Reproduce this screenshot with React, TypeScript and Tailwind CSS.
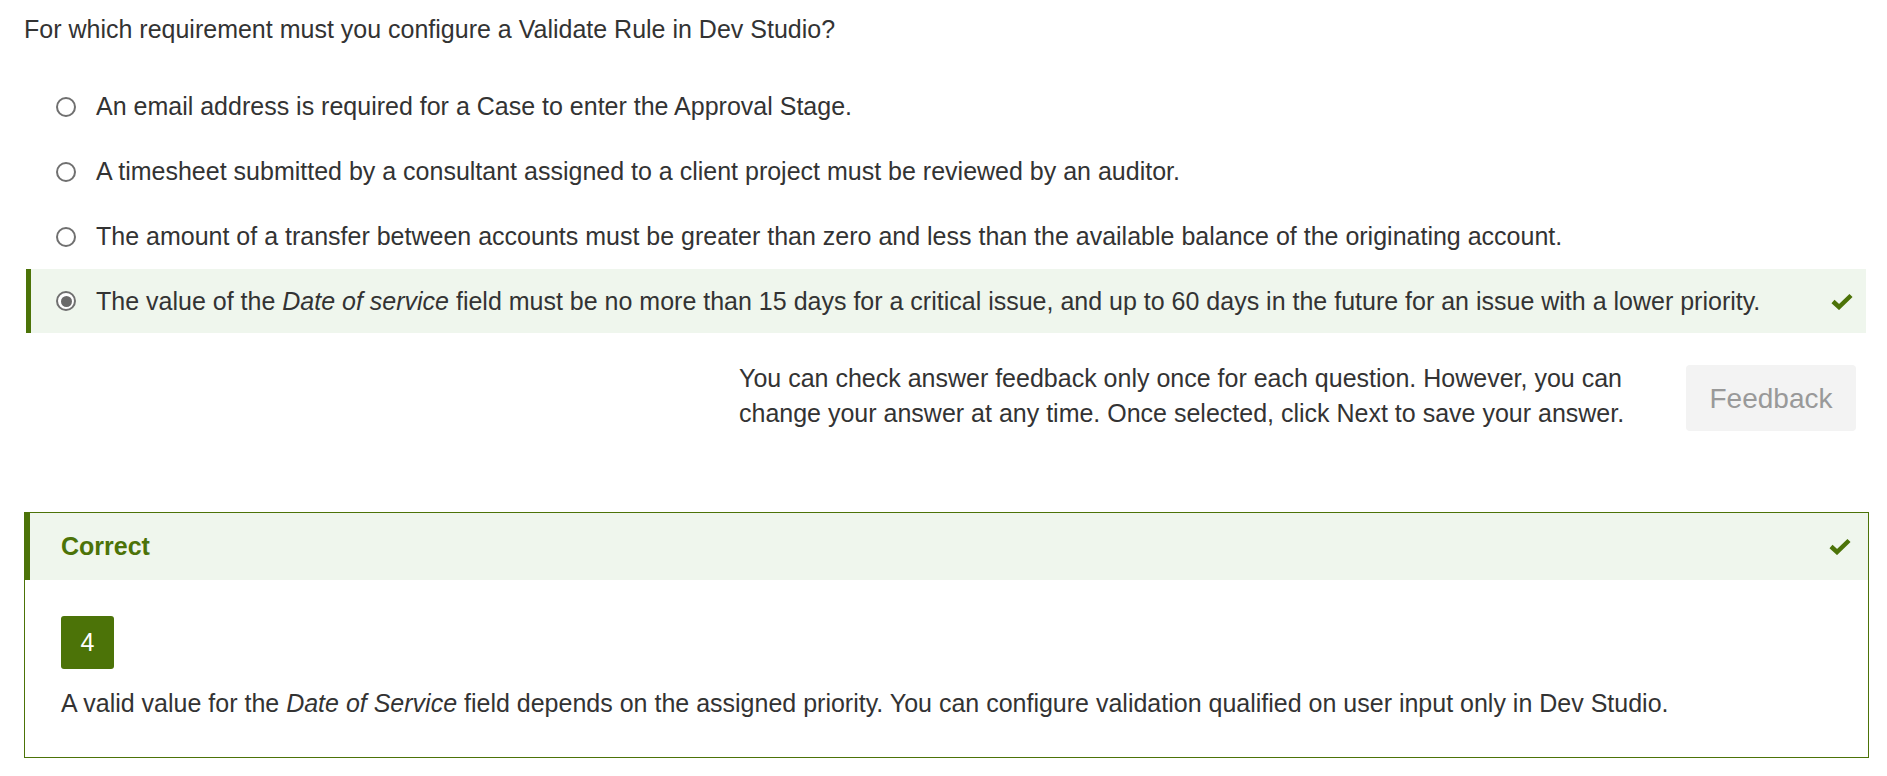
import React from "react";

const options = [
  { id: 1, text: <>An email address is required for a Case to enter the Approval Stage.</> },
  { id: 2, text: <>A timesheet submitted by a consultant assigned to a client project must be reviewed by an auditor.</> },
  { id: 3, text: <>The amount of a transfer between accounts must be greater than zero and less than the available balance of the originating account.</> },
  {
    id: 4,
    text: (
      <>
        The value of the <em>Date of service</em> field must be no more than 15 days for a critical issue, and up to 60 days in the future for an issue with a lower priority.
      </>
    ),
  },
];

function Check() {
  return (
    <svg width="22" height="17" viewBox="0 0 22 17" className="shrink-0">
      <path d="M2 8.5 L8 14 L20 2.5" fill="none" stroke="#4c7308" strokeWidth="4.5" />
    </svg>
  );
}

function Radio({ checked }: { checked: boolean }) {
  return (
    <span className="w-[20px] h-[20px] rounded-full border-2 border-[#707070] bg-white flex items-center justify-center shrink-0">
      {checked && <span className="w-[11px] h-[11px] rounded-full bg-[#6a6a6a]" />}
    </span>
  );
}

export default function App() {
  const selected = 4;

  return (
    <div className="font-['Liberation_Sans',Arial,sans-serif] text-[25px] leading-[35px] text-[#333] bg-white min-h-screen pl-[24px] pr-[18px] pt-[12px]">
      <p>For which requirement must you configure a Validate Rule in Dev Studio?</p>

      <div className="mt-[27px] ml-[2px] mr-[3px]">
        {options.map(o => {
          const on = o.id === selected;
          return (
            <div
              key={o.id}
              className={
                on
                  ? "h-[64px] flex items-center border-l-[5px] border-[#4c7308] bg-[#eff6ed] pl-[25px] pr-[13px]"
                  : "h-[65px] flex items-center border-l-[5px] border-transparent pl-[25px] pr-[13px]"
              }
            >
              <Radio checked={on} />
              <span className="ml-[20px] flex-1">{o.text}</span>
              {on && <Check />}
            </div>
          );
        })}
      </div>

      <div className="flex justify-end items-start mt-[28px] pr-[13px]">
        <p className="w-[891px]">
          You can check answer feedback only once for each question. However, you can change your answer at any time. Once selected, click Next to save your answer.
        </p>
        <button className="ml-[56px] mt-[4px] w-[170px] h-[66px] rounded-[4px] bg-[#f3f3f3] text-[28px] text-[#999] font-['Liberation_Sans',Arial,sans-serif]">
          Feedback
        </button>
      </div>

      <div className="mt-[81px] w-[1845px] border border-[#4c7308]">
        <div className="h-[67px] flex items-center justify-between bg-[#eff6ed] border-l-[5px] border-[#4c7308] pl-[31px] pr-[17px]">
          <span className="font-bold text-[#4c7308]">Correct</span>
          <Check />
        </div>
        <div className="pl-[36px] pt-[36px] pb-[36px]">
          <div className="w-[53px] h-[53px] rounded-[3px] bg-[#4c7308] text-white flex items-center justify-center">4</div>
          <p className="mt-[17px]">
            A valid value for the <em>Date of Service</em> field depends on the assigned priority. You can configure validation qualified on user input only in Dev Studio.
          </p>
        </div>
      </div>
    </div>
  );
}
